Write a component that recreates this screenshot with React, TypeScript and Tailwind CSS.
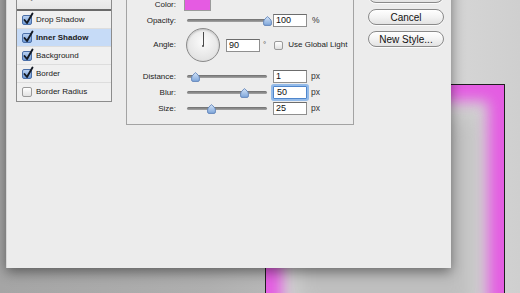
import React from "react";

const font = { fontFamily: '"Liberation Sans", Arial, sans-serif' };

function Check({ checked }: { checked: boolean }) {
  if (!checked) {
    return (
      <div className="w-[10px] h-[10px] shrink-0 rounded-[2px] border border-[#9a9a9a] bg-[linear-gradient(#ffffff,#e2e2e2)]" />
    );
  }
  return (
    <div className="relative w-[10px] h-[10px] shrink-0 rounded-[2px] border border-[#4a6fa8] bg-[linear-gradient(#b9d1f1,#6f9ad6)]">
      <svg
        className="absolute left-[0px] top-[-3px] overflow-visible"
        width="11"
        height="12"
        viewBox="0 0 11 12"
      >
        <path d="M1.5 7 L4 10 L9.5 0.5" fill="none" stroke="#141a24" strokeWidth="1.9" strokeLinecap="round" strokeLinejoin="round" />
      </svg>
    </div>
  );
}

function Slider({ thumb }: { thumb: number }) {
  return (
    <div className="relative w-[86px] h-[13px] shrink-0">
      <div className="absolute left-[3px] w-[80px] top-[5px] h-[3px] rounded-full bg-[linear-gradient(#6e6e6e,#a5a5a5)]" />
      <svg className="absolute top-[2px]" style={{ left: thumb }} width="9" height="10" viewBox="0 0 9 10">
        <defs>
          <linearGradient id={`tg${thumb}`} x1="0" y1="0" x2="0" y2="1">
            <stop offset="0" stopColor="#d3e3f7" />
            <stop offset="1" stopColor="#7ea6da" />
          </linearGradient>
        </defs>
        <path
          d="M4.5 0.6 C6.2 2.2 8.4 3.6 8.4 6 V8 Q8.4 9.4 7 9.4 H2 Q0.6 9.4 0.6 8 V6 C0.6 3.6 2.8 2.2 4.5 0.6 Z"
          fill={`url(#tg${thumb})`}
          stroke="#5f82b8"
          strokeWidth="0.9"
        />
      </svg>
    </div>
  );
}

function Field({ value, focus }: { value: string; focus?: boolean }) {
  return (
    <div
      className={
        focus
          ? "w-[34px] h-[13px] shrink-0 border border-[#4f86cc] rounded-[1px] ring-2 ring-[#94bbe9] bg-white text-[9px] leading-[11px] pl-[3px] text-[#111]"
          : "w-[34px] h-[13px] shrink-0 border border-[#8f8f8f] border-t-[#6c6c6c] bg-white text-[9px] leading-[11px] pl-[2px] text-[#111]"
      }
    >
      {value}
    </div>
  );
}

function Label({ children }: { children: React.ReactNode }) {
  return <div className="w-[49px] shrink-0 text-right text-[8px] leading-[10px] text-[#222]">{children}</div>;
}

function SliderRow({ label, thumb, value, focus }: { label: string; thumb: number; value: string; focus?: boolean }) {
  return (
    <div className="flex h-[13px] items-center">
      <Label>{label}</Label>
      <div className="ml-[8px]">
        <Slider thumb={thumb} />
      </div>
      <div className="ml-[3px]">
        <Field value={value} focus={focus} />
      </div>
      <div className="ml-[4px] text-[8.5px] text-[#333]">px</div>
    </div>
  );
}

function Button({ children }: { children: React.ReactNode }) {
  return (
    <div className="h-[16px] w-[76px] rounded-full border border-[#8a8a8a] bg-[linear-gradient(#ffffff,#f3f3f3_50%,#e3e3e3)] flex items-center justify-center text-[10px] text-[#111] shadow-[0_1px_0_rgba(255,255,255,0.8)]">
      {children}
    </div>
  );
}

const styles = [
  { name: "Drop Shadow", checked: true },
  { name: "Inner Shadow", checked: true, active: true },
  { name: "Background", checked: true },
  { name: "Border", checked: true },
  { name: "Border Radius", checked: false },
];

export default function App() {
  return (
    <div
      className="relative w-[520px] h-[293px] overflow-hidden bg-[linear-gradient(90deg,#a5a5a5_0%,#afafaf_40%,#c6c6c6_75%,#d4d4d4_90%,#cfcfcf_100%)]"
      style={font}
    >
      {/* document canvas */}
      <div className="absolute left-[265px] top-[84px] w-[240px] h-[260px] border border-[#1e1e1e] bg-[#bfbfbf] shadow-[inset_0_0_14px_16px_#e45de2,inset_0_0_22px_30px_#d4d4d4]" />

      {/* dialog */}
      <div className="absolute left-[6px] top-[-30px] w-[445px] h-[298px] bg-[#ececec] border-l border-[#d6d6d6] shadow-[0_4px_12px_rgba(0,0,0,0.45)] flex items-start pl-[9px]">
        {/* styles list */}
        <div className="mt-[19px] w-[96px] border border-[#8c8c8c] bg-[#f0f0f0]">
          <div className="h-[21px] pt-[2px] pl-[6px] text-[8px] leading-[10px] text-[#555] bg-[linear-gradient(#f7f7f7,#e6e6e6)] border-b-2 border-[#6a6a6a]">
            Styles
          </div>
          {styles.map((s, i) => (
            <div
              key={s.name}
              className={
                (s.active ? "bg-[#c6dbf7] " : "") +
                (i < styles.length - 1 ? "border-b border-[#dddddd] " : "") +
                "h-[18px] flex items-center pl-[5px] gap-[4px] text-[8px] text-[#1a1a1a]"
              }
            >
              <Check checked={s.checked} />
              <span className={s.active ? "font-bold" : ""}>{s.name}</span>
            </div>
          ))}
        </div>

        {/* inner shadow settings group */}
        <div className="ml-[14px] mt-[8px] w-[228px] border border-[#a3a3a3] bg-[#ededed] pt-[19px] pb-[9px] flex flex-col">
          <div className="flex h-[13px] items-center">
            <Label>Color:</Label>
            <div className="ml-[8px] w-[27px] h-[13px] border border-[#9a9a9a] bg-[#e55be2]" />
          </div>
          <div className="mt-[3px] flex h-[13px] items-center">
            <Label>Opacity:</Label>
            <div className="ml-[8px]">
              <Slider thumb={79} />
            </div>
            <div className="ml-[3px]">
              <Field value="100" />
            </div>
            <div className="ml-[5px] text-[8.5px] text-[#333]">%</div>
          </div>
          <div className="mt-[1px] flex h-[34px] items-center">
            <Label>Angle:</Label>
            <div className="ml-[10px] relative w-[34px] h-[34px] rounded-full border border-[#8b8b8b] bg-[radial-gradient(circle_at_50%_40%,#fbfbfb,#e4e4e4_70%,#d2d2d2)] shadow-[inset_0_1px_2px_rgba(0,0,0,0.2)]">
              <div className="absolute left-[16px] top-[3px] w-[1px] h-[14px] bg-[#4a4a4a]" />
              <div className="absolute left-[15px] top-[15.5px] w-[2px] h-[2px] rounded-full bg-[#4a4a4a]" />
            </div>
            <div className="ml-[6px]">
              <Field value="90" />
            </div>
            <div className="ml-[3px] self-start mt-[11px] text-[8px] text-[#444]">°</div>
            <div className="ml-[8px] w-[9px] h-[9px] rounded-[2px] border border-[#9a9a9a] bg-[linear-gradient(#ffffff,#e0e0e0)]" />
            <div className="ml-[5px] text-[8px] text-[#222]">Use Global Light</div>
          </div>
          <div className="mt-[8px]">
            <SliderRow label="Distance:" thumb={7} value="1" />
          </div>
          <div className="mt-[3px]">
            <SliderRow label="Blur:" thumb={56} value="50" focus />
          </div>
          <div className="mt-[3px]">
            <SliderRow label="Size:" thumb={23} value="25" />
          </div>
        </div>

        {/* buttons */}
        <div className="ml-[14px] mt-[17px] flex flex-col gap-[6px]">
          <Button>OK</Button>
          <Button>Cancel</Button>
          <Button>New Style...</Button>
        </div>
      </div>
    </div>
  );
}
